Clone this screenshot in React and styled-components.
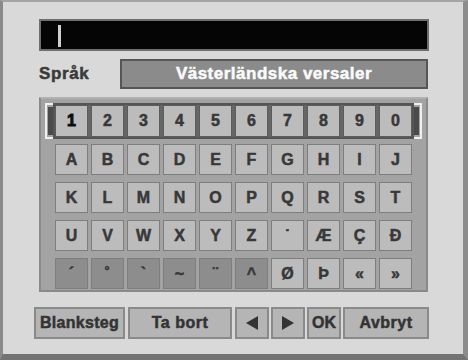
import React from "react";
import styled, { createGlobalStyle } from "styled-components";

const Global = createGlobalStyle`
  html, body { margin: 0; padding: 0; background: #d8d8d8; }
  * { box-sizing: border-box; }
`;

const Frame = styled.div`
  width: 468px;
  height: 360px;
  background: #d9d9d9;
  border-top: 2px solid #a4a4a4;
  border-left: 3px solid #8a8a8a;
  border-right: 5px solid #8c8c8c;
  border-bottom: 6px solid #737373;
  padding: 17px 0 0 36px;
  font-family: "Liberation Sans", Arial, sans-serif;
  font-weight: bold;
  display: flex;
  flex-direction: column;
`;

const InputField = styled.div`
  width: 390px;
  height: 32px;
  background: #050505;
  border: 2px solid #6e6e6e;
  padding: 4px 0 0 17px;
`;

const Cursor = styled.div`
  width: 3px;
  height: 22px;
  background: #cfcfcf;
`;

const LangRow = styled.div`
  display: flex;
  align-items: center;
  margin-top: 8px;
  height: 30px;
`;

const Label = styled.div`
  width: 81px;
  font-size: 17px;
  letter-spacing: 0.6px;
  color: #3a3a3a;
  -webkit-text-stroke: 0.5px #3a3a3a;
`;

const LangBox = styled.div`
  width: 308px;
  height: 30px;
  background: #8b8b8b;
  border: 2px solid #565656;
  color: #fafafa;
  font-size: 17px;
  -webkit-text-stroke: 0.5px #fafafa;
  display: flex;
  align-items: center;
  justify-content: center;
  letter-spacing: 0.5px;
`;

const Panel = styled.div`
  width: 389px;
  height: 195px;
  margin-top: 8px;
  background: #a3a3a3;
  border: 2px solid #8a8a8a;
  border-top-color: #b0b0b0;
  padding-top: 4px;
  display: flex;
  flex-direction: column;
  align-items: center;
`;

const SelectedLine = styled.div`
  display: flex;
  align-items: stretch;
  height: 36px;
  margin-bottom: 5px;
`;

const Bracket = styled.div`
  width: 8px;
  border: 2px solid #efefef;
  ${(p) => (p.$side === "left" ? "border-right: none;" : "border-left: none;")}
  background: linear-gradient(
    ${(p) => (p.$side === "left" ? "to right" : "to left")},
    transparent 0 1px,
    #4a4a4a 1px 100%
  );
  background-clip: content-box;
  padding: 2px 0;
`;

const NumberRow = styled.div`
  display: flex;
  gap: 3px;
  background: #666;
  border: 2px solid #555;
`;

const Row = styled.div`
  display: flex;
  gap: 3px;
  margin-bottom: 7px;
`;

const Key = styled.div`
  width: 33px;
  height: ${(p) => (p.$tall ? "32px" : "31px")};
  background: ${(p) => (p.$dark ? "#8d8d8d" : "#bcbcbc")};
  border: 1px solid ${(p) => (p.$tall ? "#5c5c5c" : "#7e7e7e")};
  color: ${(p) => (p.$active ? "#0c0c0c" : "#383838")};
  -webkit-text-stroke: ${(p) => (p.$active ? "0.9px #0c0c0c" : "0.5px #383838")};
  font-size: 16px;
  display: flex;
  align-items: center;
  justify-content: center;
`;

const ButtonRow = styled.div`
  display: flex;
  margin-top: 15px;
  margin-left: -5px;
`;

const Button = styled.div`
  width: ${(p) => p.$w}px;
  margin-right: ${(p) => p.$mr}px;
  height: 32px;
  background: #b5b5b5;
  border: 2px solid #8a8a8a;
  color: #333;
  -webkit-text-stroke: 0.5px #333;
  font-size: 16px;
  letter-spacing: ${(p) => p.$ls || 0}px;
  display: flex;
  align-items: center;
  justify-content: center;
`;

const Arrow = styled.svg`
  width: 12px;
  height: 14px;
  fill: #333;
`;

const numbers = ["1", "2", "3", "4", "5", "6", "7", "8", "9", "0"];
const rows = [
  ["A", "B", "C", "D", "E", "F", "G", "H", "I", "J"],
  ["K", "L", "M", "N", "O", "P", "Q", "R", "S", "T"],
  ["U", "V", "W", "X", "Y", "Z", "˙", "Æ", "Ç", "Đ"],
];
const accents = ["´", "˚", "`", "~", "¨", "^", "Ø", "Þ", "«", "»"];

export default function App() {
  return (
    <>
      <Global />
      <Frame>
        <InputField>
          <Cursor />
        </InputField>
        <LangRow>
          <Label>Språk</Label>
          <LangBox>Västerländska versaler</LangBox>
        </LangRow>
        <Panel>
          <SelectedLine>
            <Bracket $side="left" />
            <NumberRow>
              {numbers.map((n, i) => (
                <Key key={n} $tall $active={i === 0}>
                  {n}
                </Key>
              ))}
            </NumberRow>
            <Bracket $side="right" />
          </SelectedLine>
          {rows.map((r, ri) => (
            <Row key={ri}>
              {r.map((c) => (
                <Key key={c}>{c}</Key>
              ))}
            </Row>
          ))}
          <Row>
            {accents.map((c, i) => (
              <Key key={c} $dark={i < 6}>
                {c}
              </Key>
            ))}
          </Row>
        </Panel>
        <ButtonRow>
          <Button $w={91} $mr={3} $ls={0.3}>Blanksteg</Button>
          <Button $w={104} $mr={3} $ls={0.5}>Ta bort</Button>
          <Button $w={34} $mr={2}>
            <Arrow viewBox="0 0 12 14">
              <polygon points="12,0 12,14 0,7" />
            </Arrow>
          </Button>
          <Button $w={34} $mr={2}>
            <Arrow viewBox="0 0 12 14">
              <polygon points="0,0 0,14 12,7" />
            </Arrow>
          </Button>
          <Button $w={34} $mr={2}>OK</Button>
          <Button $w={86} $mr={0} $ls={0.5}>Avbryt</Button>
        </ButtonRow>
      </Frame>
    </>
  );
}
